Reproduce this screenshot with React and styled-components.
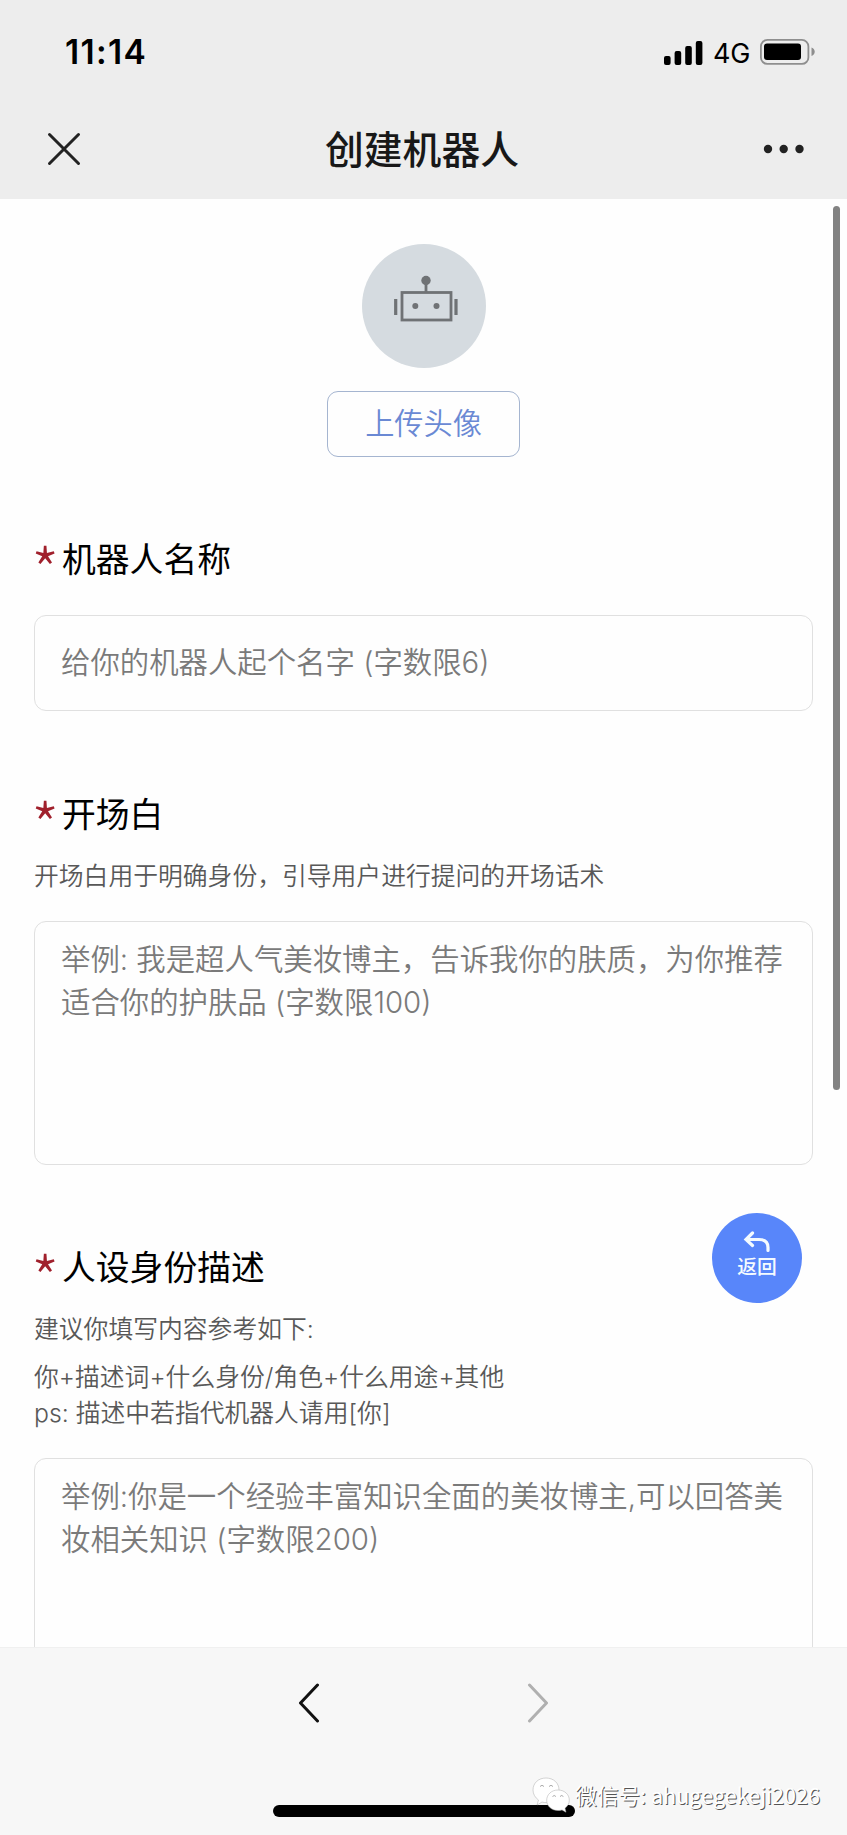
import React from "react";
import styled, { createGlobalStyle } from "styled-components";

const GlobalStyle = createGlobalStyle`
  * {
    box-sizing: border-box;
  }

  body {
    margin: 0;
    background-color: #fefefe;
    font-family: Inter, "Noto Sans CJK SC", sans-serif;
  }

  svg {
    display: block;
  }
`;

const Screen = styled.div`
  position: relative;
  display: flex;
  flex-direction: column;
  width: 847px;
  height: 1835px;
  overflow: hidden;
`;

const Header = styled.header`
  flex: none;
  height: 199px;
  background-color: #ededed;
`;

const StatusBar = styled.div`
  display: flex;
  align-items: center;
  justify-content: space-between;
  height: 104px;
  padding: 0 32px 0 65px;
`;

const Time = styled.span`
  font-size: 33.5px;
  font-weight: 600;
  letter-spacing: 1.3px;
  color: #000;
`;

const StatusIcons = styled.div`
  display: flex;
  align-items: center;
`;

const Network = styled.span`
  margin: 2px 10px 0 10px;
  font-size: 27px;
  letter-spacing: -0.3px;
  color: #000;
`;

const TitleBar = styled.div`
  display: grid;
  grid-template-columns: 1fr auto 1fr;
  align-items: center;
  height: 90px;
  padding: 0 42px 0 47px;
`;

const Title = styled.h1`
  margin: 1px 8px 0 0;
  font-size: 38.8px;
  font-weight: 500;
  line-height: 50px;
  color: #181818;
`;

const IconButton = styled.button`
  display: flex;
  justify-self: ${({ $align }) => $align || "start"};
  padding: 0;
  border: none;
  background: none;
`;

const Content = styled.main`
  flex: 1;
  min-height: 0;
  padding: 45px 34px 0;
  overflow: hidden;
`;

const AvatarArea = styled.div`
  display: flex;
  flex-direction: column;
  align-items: center;
  height: 283px;
`;

const Avatar = styled.div`
  width: 124px;
  height: 124px;
  border-radius: 50%;
  background-color: #d5dbe0;
`;

const UploadButton = styled.button`
  width: 193px;
  height: 66px;
  margin-top: 23px;
  padding: 0 0 7px;
  border: 1px solid #a5b5d0;
  border-radius: 11px;
  background: none;
  font-family: inherit;
  font-size: 29.2px;
  font-weight: 350;
  color: #6a89d4;
`;

const Field = styled.section`
  margin-bottom: ${({ $gap }) => $gap}px;
`;

const Label = styled.h2`
  display: flex;
  align-items: center;
  height: 66px;
  margin: 0;
  padding-bottom: 5px;
  font-size: 33.8px;
  font-weight: 400;
  color: #000;
`;

const Required = styled.span`
  width: 28px;
  height: 34px;
  font-family: "Noto Sans CJK SC", sans-serif;
  font-size: 64px;
  font-weight: 300;
  line-height: 55px;
  text-indent: -3px;
  color: #a0202c;
`;

const Hint = styled.p`
  margin: 0;
  height: ${({ $height }) => $height || 36}px;
  font-size: 24.8px;
  font-weight: 350;
  line-height: 37px;
  color: #585858;
  white-space: pre;

  ${Label} + & {
    margin-top: 10px;
  }
`;

const Box = styled.div`
  width: 779px;
  height: ${({ $height }) => $height}px;
  margin-top: ${({ $top }) => $top}px;
  padding: ${({ $pad }) => $pad}px 0 0 26px;
  border: 1px solid #e0e0e0;
  border-radius: 12px;
  font-size: 29.4px;
  font-weight: 350;
  line-height: 43px;
  color: #7a7a7a;
  white-space: pre;
`;

const ScrollThumb = styled.div`
  position: absolute;
  top: 206px;
  right: 7px;
  width: 7px;
  height: 884px;
  border-radius: 4px;
  background-color: #828282;
`;

const BackBubble = styled.button`
  position: absolute;
  top: 1213px;
  right: 45px;
  display: flex;
  flex-direction: column;
  align-items: center;
  width: 90px;
  height: 90px;
  padding: 18px 0 0;
  border: none;
  border-radius: 50%;
  background-color: #5886fa;
  font-family: inherit;
  font-size: 19.8px;
  font-weight: 500;
  line-height: 28px;
  color: #f4fbff;
`;

const Footer = styled.footer`
  flex: none;
  display: flex;
  flex-direction: column;
  align-items: center;
  justify-content: space-between;
  height: 188px;
  padding: 35px 0 18px;
  border-top: 1px solid #f0f0f0;
  background-color: #f7f7f7;
`;

const NavButtons = styled.div`
  display: flex;
  gap: 207px;
`;

const HomeIndicator = styled.div`
  width: 302px;
  height: 12px;
  border-radius: 6px;
  background-color: #000;
`;

const Watermark = styled.div`
  position: absolute;
  right: 27px;
  bottom: 22px;
  display: flex;
  align-items: center;
  gap: 5px;
  font-family: "Noto Sans CJK SC", sans-serif;
  font-size: 21.6px;
  line-height: 36px;
  color: #fff;
  text-shadow: 1px 1px 0 #555;
  white-space: nowrap;
`;

const SignalIcon = () => (
  <svg width="39" height="25" viewBox="0 0 39 25">
    <rect x="0" y="16" width="6.6" height="9" rx="2" />
    <rect x="10.6" y="11" width="6.6" height="14" rx="2" />
    <rect x="21.2" y="6" width="6.6" height="19" rx="2" />
    <rect x="31.8" y="1" width="6.6" height="24" rx="2" />
  </svg>
);

const BatteryIcon = () => (
  <svg width="55" height="26" viewBox="0 0 55 26">
    <rect x="0.9" y="0.9" width="47.5" height="24" rx="6.5" fill="none" stroke="#8e8e8e" strokeWidth="1.8" />
    <rect x="4" y="4.5" width="37" height="16.5" rx="3" />
    <path d="M51.5 8.5c4.3 1.5 4.3 7 0 8.5z" fill="#8e8e8e" />
  </svg>
);

const RobotIcon = () => (
  <svg width="124" height="124" viewBox="0 0 124 124" stroke="#6f7275" fill="none">
    <rect x="40" y="48.5" width="49" height="27.5" strokeWidth="2.8" />
    <path d="M64 36v12" strokeWidth="2.8" />
    <circle cx="64" cy="36.5" r="4.7" fill="#6f7275" stroke="none" />
    <circle cx="53.3" cy="62" r="3" fill="#6f7275" stroke="none" />
    <circle cx="74.5" cy="62" r="3" fill="#6f7275" stroke="none" />
    <path d="M33.7 55v16M94 55v16" strokeWidth="3.2" />
  </svg>
);

const WechatIcon = () => (
  <svg width="38" height="36" viewBox="0 0 38 36" fill="#fff" stroke="#aaa" strokeWidth="0.5">
    <path d="M14 1C6.5 1 1 6 1 13c0 4 2 7.5 5.5 10L5 28l5-3c1.5.5 3 .6 4.5.6C22 25.6 27 20 27 13S21.5 1 14 1z" />
    <path d="M26 13c-6.5 0-11.3 4.5-11.3 10.3S19.5 33.5 26 33.5c1.4 0 2.7-.2 4-.6l4 2.3-1-4c2.7-2 4.3-4.8 4.3-8C37.3 17.5 32.5 13 26 13z" />
    <path d="M8 9.5q2-2.5 4 0M17 9.5q2-2.5 4 0M20.5 19.5q1.7-2 3.4 0M28 19.5q1.7-2 3.4 0" fill="none" stroke="#555" />
  </svg>
);

const App = () => {
  return (
    <Screen>
      <GlobalStyle />
      <Header>
        <StatusBar>
          <Time>11:14</Time>
          <StatusIcons>
            <SignalIcon />
            <Network>4G</Network>
            <BatteryIcon />
          </StatusIcons>
        </StatusBar>
        <TitleBar>
          <IconButton>
            <svg width="34" height="34" viewBox="0 0 34 34" stroke="#222" strokeWidth="3" strokeLinecap="round">
              <path d="M2.5 2.5l29 29M31.5 2.5l-29 29" />
            </svg>
          </IconButton>
          <Title>创建机器人</Title>
          <IconButton $align="end">
            <svg width="42" height="10" viewBox="0 0 42 10" fill="#222">
              <circle cx="5" cy="5" r="4.2" />
              <circle cx="20.7" cy="5" r="4.2" />
              <circle cx="36.5" cy="5" r="4.2" />
            </svg>
          </IconButton>
        </TitleBar>
      </Header>

      <Content>
        <AvatarArea>
          <Avatar>
            <RobotIcon />
          </Avatar>
          <UploadButton>上传头像</UploadButton>
        </AvatarArea>

        <Field $gap={71}>
          <Label>
            <Required>*</Required>机器人名称
          </Label>
          <Box $height={96} $top={22} $pad={25}>
            给你的机器人起个名字 (字数限6)
          </Box>
        </Field>

        <Field $gap={70}>
          <Label>
            <Required>*</Required>开场白
          </Label>
          <Hint>开场白用于明确身份，引导用户进行提问的开场话术</Hint>
          <Box $height={244} $top={27} $pad={16}>
            {"举例: 我是超人气美妆博主，告诉我你的肤质，为你推荐\n适合你的护肤品 (字数限100)"}
          </Box>
        </Field>

        <Field $gap={0}>
          <Label>
            <Required>*</Required>人设身份描述
          </Label>
          <Hint $height={48}>建议你填写内容参考如下:</Hint>
          <Hint>你+描述词+什么身份/角色+什么用途+其他</Hint>
          <Hint>ps: 描述中若指代机器人请用[你]</Hint>
          <Box $height={244} $top={27} $pad={16}>
            {"举例:你是一个经验丰富知识全面的美妆博主,可以回答美\n妆相关知识 (字数限200)"}
          </Box>
        </Field>
      </Content>

      <Footer>
        <NavButtons>
          <IconButton>
            <svg width="22" height="40" viewBox="0 0 22 40" fill="none" stroke="#111" strokeWidth="3" strokeLinecap="round" strokeLinejoin="round">
              <path d="M19.5 2L2.5 20l17 18" />
            </svg>
          </IconButton>
          <IconButton>
            <svg width="22" height="40" viewBox="0 0 22 40" fill="none" stroke="#b0b0b0" strokeWidth="3" strokeLinecap="round" strokeLinejoin="round">
              <path d="M2.5 2l17 18-17 18" />
            </svg>
          </IconButton>
        </NavButtons>
        <HomeIndicator />
      </Footer>

      <ScrollThumb />
      <BackBubble>
        <svg width="28" height="22" viewBox="0 0 28 22" fill="none" stroke="#f4fbff" strokeWidth="3.2" strokeLinecap="round">
          <path d="M9.5 2L3 8.5l6.5 6M3 8.5h13q9 0 9 8v3" />
        </svg>
        返回
      </BackBubble>
      <Watermark>
        <WechatIcon />
        微信号: ahugegekeji2026
      </Watermark>
    </Screen>
  );
};

export default App;
